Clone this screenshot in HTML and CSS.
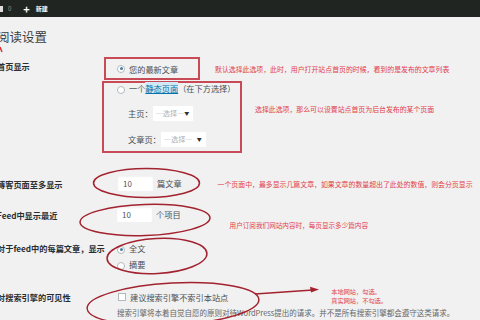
FILE: index.html
```html
<!DOCTYPE html>
<html lang="zh-CN">
<head>
  <meta charset="UTF-8" />
  <meta name="viewport" content="width=device-width, initial-scale=1.0"/>
  <title>阅读设置</title>
  <link rel="stylesheet" href="styles.css">
</head>
<body>

  <div class="topbar">
    <span class="tb-icon"></span>
    <span class="tb-count">0</span>
    <span class="tb-plus">+</span>
    <span class="tb-new">新建</span>
  </div>

  <div class="wrap">
    <h1 class="title">阅读设置</h1>

    <div class="row row-front">
      <div class="label">首页显示</div>
      <div class="field">
        <div class="line">
          <div class="box box-a"><span class="radio checked"></span>您的最新文章</div>
          <span class="note note-a">默认选择此选项，此时，用户打开站点首页的时候，看到的是发布的文章列表</span>
        </div>
        <div class="line line-b">
          <div class="box box-b">
            <div class="opt"><span class="radio"></span>一个<a class="link">静态页面</a>（在下方选择）</div>
            <div class="sub"><span>主页：</span><span class="select">—选择— <i>▼</i></span></div>
            <div class="sub sub-2"><span>文章页：</span><span class="select wide">—选择— <i>▼</i></span></div>
          </div>
          <span class="note note-b">选择此选项，那么可以设置站点首页为后台发布的某个页面</span>
        </div>
      </div>
    </div>

    <div class="row row-posts">
      <div class="label">博客页面至多显示</div>
      <div class="field inline">
        <span class="num">10</span>
        <span class="unit">篇文章</span>
        <span class="note note-c">一个页面中，最多显示几篇文章，如果文章的数量超出了此处的数值，则会分页显示</span>
      </div>
    </div>

    <div class="row row-feed">
      <div class="label">Feed中显示最近</div>
      <div class="field inline">
        <span class="num">10</span>
        <span class="unit">个项目</span>
        <span class="note note-d">用户订阅我们网站内容时，每页显示多少篇内容</span>
      </div>
    </div>

    <div class="row row-full">
      <div class="label">对于feed中的每篇文章，显示</div>
      <div class="field opts">
        <div class="opt"><span class="radio checked"></span>全文</div>
        <div class="opt"><span class="radio"></span>摘要</div>
      </div>
    </div>

    <div class="row row-seo">
      <div class="label">对搜索引擎的可见性</div>
      <div class="field seo">
        <div class="opt">
          <span class="check"></span>建议搜索引擎不索引本站点
          <span class="note note-e">本地网站，勾选。<br>真实网站，不勾选。</span>
        </div>
        <p class="desc">搜索引擎将本着自觉自愿的原则对待WordPress提出的请求。并不是所有搜索引擎都会遵守这类请求。</p>
      </div>
    </div>
  </div>

  <!-- красные пометки поверх скриншота -->
  <svg class="marks" width="480" height="320" viewBox="0 0 480 320">
    <g fill="none" stroke="#a3222f" stroke-width="1.5">
      <ellipse cx="146.5" cy="183" rx="53" ry="14.5"/>
      <ellipse cx="145" cy="220" rx="65" ry="15.5" transform="rotate(-2 145 220)"/>
      <ellipse cx="157" cy="256" rx="50" ry="17.5" transform="rotate(-3 157 256)"/>
      <ellipse cx="173" cy="304" rx="86" ry="21" transform="rotate(-3 173 304)"/>
      <path d="M255 294 L313 290"/>
      <path d="M0 47 L2 52" stroke="#d33"/>
    </g>
    <path d="M319 289.6 L310 286.8 L311 292.6 Z" fill="#a3222f"/>
  </svg>

</body>
</html>
```

FILE: styles.css
```css
body {
  margin: 0;
  height: 320px;
  overflow: hidden;
  background: #f1f1f1;
  color: #333;
  font-family: "Noto Sans CJK SC", "Noto Sans", sans-serif;
}
.topbar {
  height: 17px;
  background: #202522;
  display: flex;
  align-items: center;
  color: #fff;
  font-size: 6px;
}
.tb-icon {
  width: 3px;
  height: 6px;
  background: #ddd;
}
.tb-count {
  margin-left: 5px;
  color: #999;
}
.tb-plus {
  margin-left: 12px;
  font-size: 11px;
  font-weight: bold;
  line-height: 10px;
}
.tb-new {
  margin-left: 6px;
  font-weight: bold;
}
.wrap {
  margin-left: -3px;
}
.title {
  margin: 12px 0 12px;
  font-size: 12.5px;
  line-height: 16px;
  font-weight: normal;
  color: #3a3f44;
}
.row {
  display: flex;
  align-items: flex-start;
}
.label {
  width: 105px;
  flex: none;
  font-size: 8.2px;
  line-height: 12px;
  font-weight: bold;
  color: #2a2e32;
  white-space: nowrap;
}
.field {
  font-size: 8.2px;
  line-height: 12px;
  color: #4a4f54;
  white-space: nowrap;
}
.note {
  font-size: 6.9px;
  line-height: 10px;
  color: #e2404a;
  white-space: nowrap;
}
.radio {
  display: inline-block;
  width: 8px;
  height: 8px;
  box-sizing: border-box;
  border: 1px solid #b4b9be;
  border-radius: 50%;
  background: #fff;
  margin-right: 4px;
  vertical-align: middle;
  position: relative;
}
.radio.checked::after {
  content: "";
  position: absolute;
  left: 1.5px;
  top: 1.5px;
  width: 3px;
  height: 3px;
  border-radius: 50%;
  background: #4a7f9a;
}
.check {
  display: inline-block;
  width: 8px;
  height: 8px;
  box-sizing: border-box;
  border: 1px solid #b4b9be;
  background: #fff;
  margin-right: 4px;
  vertical-align: middle;
}

/* первый блок */
.row-front .label {
  padding-top: 3px;
}
.line {
  display: flex;
  align-items: center;
}
.box {
  border: 2px solid #c84a56;
  box-sizing: border-box;
}
.box-a {
  width: 96px;
  height: 23px;
  margin-left: 2px;
  display: flex;
  align-items: center;
  padding-left: 11px;
}
.note-a {
  margin-left: 15px;
}
.line-b {
  align-items: flex-start;
}
.box-b {
  width: 140px;
  height: 72px;
  margin-top: 1px;
}
.box-b .opt {
  line-height: 10px;
  padding-left: 13px;
}
.link {
  color: #0073aa;
  text-decoration: underline;
  background: #d2e8f5;
}
.sub {
  display: flex;
  align-items: center;
  height: 15px;
  margin-top: 12px;
  padding-left: 24px;
}
.sub-2 {
  margin-top: 11px;
}
.select {
  width: 40px;
  height: 15px;
  box-sizing: border-box;
  background: #fff;
  color: #b0b0b0;
  font-size: 7.2px;
  display: flex;
  align-items: center;
  justify-content: space-between;
  padding: 0 4px 0 3px;
}
.select.wide {
  width: 45px;
}
.select i {
  font-style: normal;
  color: #333;
  font-size: 5px;
}
.note-b {
  margin-left: 13px;
  margin-top: 24px;
}

/* числа */
.row-posts {
  margin-top: 23px;
}
.row-posts .label,
.row-feed .label {
  padding-top: 1.5px;
}
.inline {
  display: flex;
  align-items: flex-start;
}
.num {
  width: 35px;
  height: 15px;
  box-sizing: border-box;
  background: #fff;
  color: #555;
  font-size: 8px;
  line-height: 15px;
  padding-left: 5px;
  box-shadow: inset 0 1px 2px rgba(0, 0, 0, 0.06);
}
.row-posts .num {
  margin-left: 16px;
}
.row-feed .num {
  margin-left: 15px;
}
.unit {
  margin-left: 4px;
  line-height: 15px;
}
.note-c {
  margin-left: 36px;
  margin-top: 2.5px;
}
.row-feed {
  margin-top: 16px;
}
.note-d {
  margin-left: 49px;
  margin-top: 13px;
  margin-bottom: -8px;
  font-size: 6.6px;
}

/* показ */
.row-full {
  margin-top: 20px;
}
.opts {
  padding-left: 15px;
}
.opts .opt + .opt {
  margin-top: 4px;
}

/* поисковики */
.row-seo {
  margin-top: 21px;
}
.seo {
  padding-left: 16px;
}
.seo .opt {
  display: flex;
  align-items: center;
  height: 12px;
}
.note-e {
  margin-left: 103px;
  margin-top: -1px;
  font-size: 6.2px;
  line-height: 8.5px;
}
.desc {
  margin: 5px 0 0 -1px;
  font-size: 7.5px;
  line-height: 10px;
  color: #666;
}
.marks {
  position: absolute;
  left: 0;
  top: 0;
  pointer-events: none;
}
```
